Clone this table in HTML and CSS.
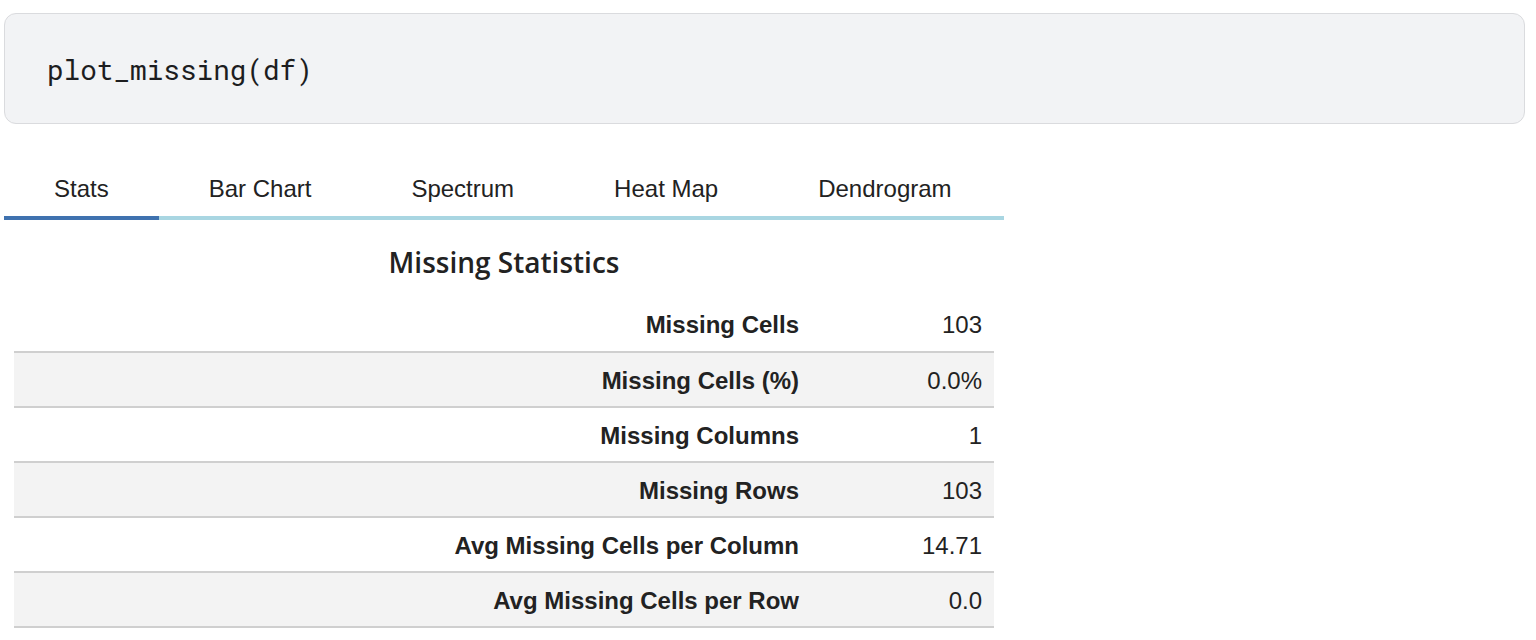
FILE: index.html
```html
<!DOCTYPE html>
<html>
<head>
<meta charset="utf-8">
<link rel="stylesheet" href="styles.css">
</head>
<body>
<div class="page">
  <div class="code"><span>plot_missing(df)</span></div>
  <div class="tabs">
    <div class="tab active">Stats</div>
    <div class="tab">Bar Chart</div>
    <div class="tab">Spectrum</div>
    <div class="tab">Heat Map</div>
    <div class="tab last">Dendrogram</div>
  </div>
  <div class="panel">
    <div class="title">Missing Statistics</div>
    <table class="stats">
      <tr><th>Missing Cells</th><td>103</td></tr>
      <tr><th>Missing Cells (%)</th><td>0.0%</td></tr>
      <tr><th>Missing Columns</th><td>1</td></tr>
      <tr><th>Missing Rows</th><td>103</td></tr>
      <tr><th>Avg Missing Cells per Column</th><td>14.71</td></tr>
      <tr><th>Avg Missing Cells per Row</th><td>0.0</td></tr>
    </table>
  </div>
</div>
</body>
</html>
```
FILE: styles.css
```css
html, body {
  margin: 0;
  padding: 0;
  background: #ffffff;
}
.page {
  padding: 13px 11px 0 4px;
  font-family: "Liberation Sans", Arial, sans-serif;
  color: #222222;
}
.code {
  height: 109px;
  box-sizing: content-box;
  border: 1px solid #dadbde;
  border-radius: 12px;
  background: #f2f3f5;
  display: flex;
  align-items: center;
  padding: 0 0 0 42px;
}
.code span {
  font-family: "Roboto Mono", "DejaVu Sans Mono", "Liberation Mono", monospace;
  font-size: 27.7px;
  color: #1d1d1f;
  position: relative;
  top: 1px;
}
.tabs {
  display: flex;
  margin-top: 38px;
}
.tab {
  padding: 0 50px;
  height: 54px;
  line-height: 54px;
  font-size: 24px;
  color: #222222;
  border-bottom: 4px solid #a9d6e2;
  text-align: center;
  white-space: nowrap;
}
.tab.last {
  padding-right: 52px;
}
.tab.active {
  border-bottom-color: #3f72af;
}
.panel {
  width: 980px;
  margin-left: 10px;
}
.title {
  text-align: center;
  font-family: "Open Sans", "Liberation Sans", sans-serif;
  font-weight: 600;
  font-size: 28px;
  color: #222222;
  height: 77px;
  line-height: 84px;
}
.stats {
  width: 980px;
  border-collapse: collapse;
  font-size: 24px;
}
.stats tr {
  height: 55px;
  border-bottom: 2px solid #cfcfcf;
}
.stats tr:nth-child(even) {
  background: #f3f3f3;
}
.stats th {
  text-align: right;
  font-weight: bold;
  padding: 2px 13px 0 0;
}
.stats td {
  text-align: right;
  width: 170px;
  padding: 2px 12px 0 0;
}
```
